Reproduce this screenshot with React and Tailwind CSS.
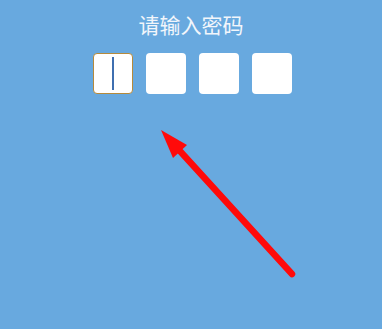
export default function App() {
  return (
    <div className="relative w-[382px] h-[329px] bg-[#68a9df] overflow-hidden" style={{ fontFamily: '"Noto Sans CJK SC", "Noto Sans", sans-serif' }}>
      <div className="pt-[10px] flex flex-col items-center">
        <div className="text-[21px] leading-[28px] text-[#f2f6fb]">请输入密码</div>
        <div className="mt-[15px] flex gap-[13px] ml-[3px]">
          <div className="w-[40px] h-[41px] bg-white rounded-[4px] border border-[#b58a3c] flex items-center justify-center">
            <div className="w-[2px] h-[33px] bg-[#3f6fb0]" />
          </div>
          <div className="w-[40px] h-[41px] bg-white rounded-[4px]" />
          <div className="w-[40px] h-[41px] bg-white rounded-[4px]" />
          <div className="w-[40px] h-[41px] bg-white rounded-[4px]" />
        </div>
      </div>
      <svg className="absolute inset-0" width="382" height="329" viewBox="0 0 382 329">
        <line x1="179" y1="150" x2="292" y2="274" stroke="#ff0a0a" strokeWidth="6.5" strokeLinecap="round" />
        <polygon points="161,130 187,145 173,158" fill="#ff0a0a" />
      </svg>
    </div>
  );
}
